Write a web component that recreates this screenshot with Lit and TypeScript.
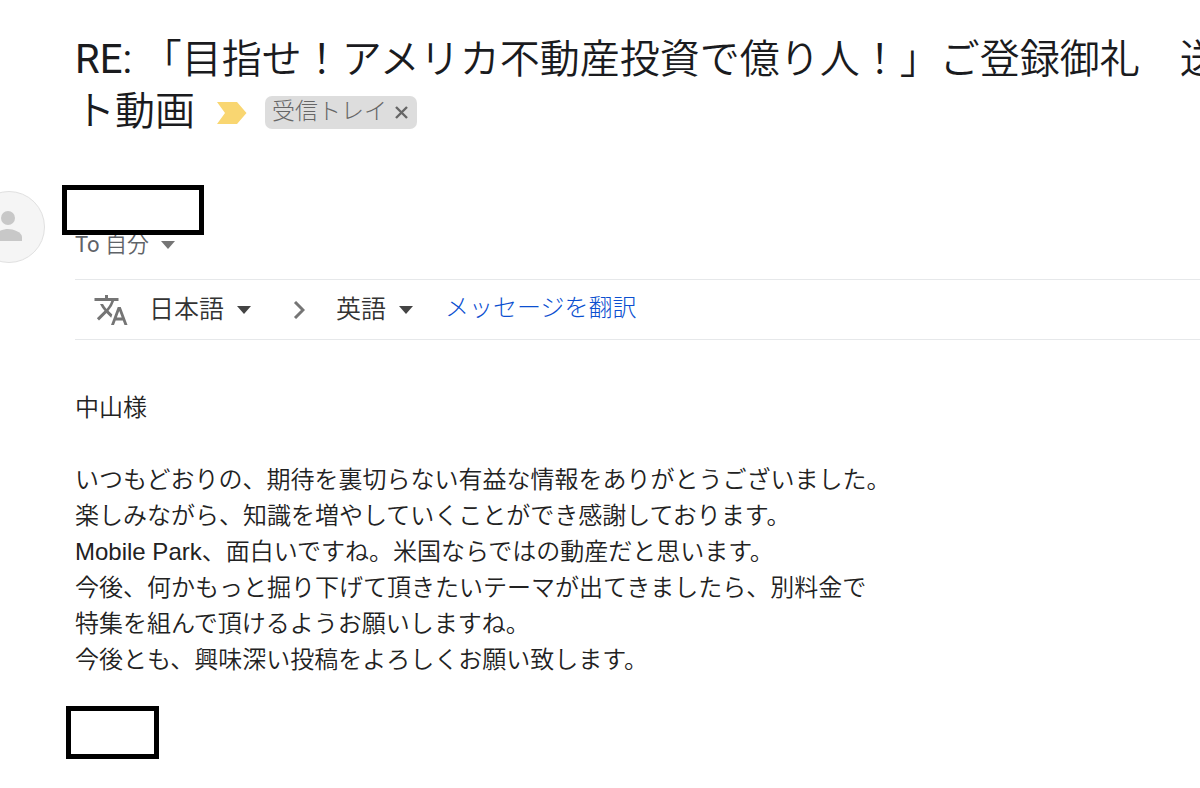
import { LitElement, html, css } from "lit";
import { customElement } from "lit/decorators.js";

const caret = html`<svg class="caret" viewBox="0 0 14 8" aria-hidden="true"><path d="M0 0h14L7 8z" /></svg>`;

@customElement("app-root")
export class AppRoot extends LitElement {
  static styles = css`
    :host {
      display: block;
      min-height: 100vh;
      overflow: hidden;
      background: #fff;
      color: #222;
      font-family: Roboto, "Noto Sans CJK JP", sans-serif;
      font-weight: 350;
    }
    .mail {
      padding: 34px 0 28px 75px;
    }
    button,
    select {
      font: inherit;
      color: inherit;
      background: none;
      border: 0;
      margin: 0;
      padding: 0;
      cursor: pointer;
    }
    .subject {
      margin: 0;
      font-size: 40px;
      line-height: 52px;
      font-weight: 350;
      color: #1a1b1e;
      white-space: nowrap;
    }
    .latin {
      font-weight: 400;
    }
    .tail {
      display: flex;
      align-items: center;
    }
    .marker {
      width: 30px;
      height: 22px;
      margin: 2px 18px 0 22px;
      fill: #f9d671;
    }
    .chip {
      display: flex;
      align-items: center;
      gap: 8px;
      height: 33px;
      padding: 0 9px 0 7px;
      border-radius: 7px;
      background: #ddd;
      color: #666;
      font-size: 23px;
      line-height: 32px;
      font-weight: 300;
    }
    .chip button {
      display: flex;
    }
    .chip svg {
      width: 13px;
      height: 13px;
      stroke: #666;
      stroke-width: 2.4;
    }
    .sender {
      position: relative;
      display: flex;
      align-items: flex-end;
      height: 72px;
      margin: 53px 0 16px;
    }
    .avatar {
      flex: none;
      width: 72px;
      height: 72px;
      margin: 0 30px 0 -102px;
    }
    .redacted {
      box-sizing: border-box;
      border: 5px solid #000;
      background: #fff;
    }
    .name {
      position: absolute;
      left: -13px;
      top: -6px;
      width: 142px;
      height: 50px;
    }
    .to {
      display: flex;
      align-items: center;
      gap: 12px;
      margin-bottom: 2px;
      font-size: 22px;
      line-height: 32px;
      color: #5f6368;
    }
    .caret {
      width: 14px;
      height: 8px;
      fill: #444;
      pointer-events: none;
    }
    .to .caret {
      fill: #757575;
    }
    .translate {
      display: flex;
      align-items: center;
      height: 59px;
      padding-left: 18px;
      border-top: 1px solid #e6e8ea;
      border-bottom: 1px solid #e6e8ea;
      color: #333;
      font-size: 25px;
    }
    .glyph {
      width: 36px;
      height: 36px;
      margin-right: 20px;
      fill: #757575;
    }
    .lang {
      display: flex;
      align-items: center;
      gap: 12px;
    }
    .lang select {
      appearance: none;
      height: 36px;
      line-height: 36px;
    }
    .arrow {
      width: 12px;
      height: 18px;
      margin: 0 31px 0 42px;
      fill: none;
      stroke: #757575;
      stroke-width: 3;
    }
    .link {
      margin-left: 32px;
      font-size: 24px;
      line-height: 32px;
      font-weight: 300;
      padding-bottom: 4px;
      color: #0b4fd0;
      text-decoration: none;
    }
    .body {
      margin-top: 50px;
      font-family: "Liberation Sans", "Noto Sans CJK JP", sans-serif;
      font-size: 24px;
      line-height: 36px;
    }
    .body p {
      margin: 0 0 36px;
    }
    .signature {
      width: 93px;
      height: 53px;
      margin: -8px 0 0 -9px;
    }
  `;

  render() {
    return html`
      <main class="mail">
        <h1 class="subject">
          <span class="latin">RE:</span> 「目指せ！アメリカ不動産投資で億り人！」ご登録御礼　送
          <span class="tail">
            ト動画
            <svg class="marker" viewBox="0 0 30 22" aria-hidden="true"><path d="M0 0h20l9.500 11L20 22H0l8-11z" /></svg>
            <span class="chip">
              受信トレイ
              <button aria-label="×">
                <svg viewBox="0 0 13 13"><path d="M1 1l11 11M12 1L1 12" /></svg>
              </button>
            </span>
          </span>
        </h1>

        <section class="sender">
          <svg class="avatar" viewBox="0 0 72 72" aria-hidden="true">
            <circle cx="36" cy="36" r="35.500" fill="#f5f5f5" stroke="#e0e0e0" />
            <circle cx="35" cy="27" r="7" fill="#c8c8c8" />
            <path d="M21 50v-4c0-5 9-8 14-8s14 3 14 8v4z" fill="#c8c8c8" />
          </svg>
          <button class="to"><span><span class="latin">To</span> 自分</span> ${caret}</button>
          <div class="redacted name"></div>
        </section>

        <section class="translate">
          <svg class="glyph" viewBox="0 0 24 24" aria-hidden="true">
            <path
              d="M12.870 15.070l-2.540-2.510.030-.030A17.520 17.520 0 0 0 14.070 6H17V4h-7V2H8v2H1v1.990h11.170C11.500 7.920 10.440 9.750 9 11.350 8.070 10.320 7.300 9.190 6.690 8h-2c.730 1.630 1.730 3.170 2.980 4.560l-5.090 5.020L4 19l5-5 3.110 3.110.760-2.040zM18.500 10h-2L12 22h2l1.120-3h4.750L21 22h2l-4.500-12zm-2.620 7l1.620-4.330L19.120 17h-3.240z"
            />
          </svg>
          <label class="lang">
            <select aria-label="日本語"><option>日本語</option></select>
            ${caret}
          </label>
          <svg class="arrow" viewBox="0 0 12 18" aria-hidden="true"><path d="M2 1l8 8-8 8" /></svg>
          <label class="lang">
            <select aria-label="英語"><option>英語</option></select>
            ${caret}
          </label>
          <a class="link" href="#">メッセージを翻訳</a>
        </section>

        <article class="body">
          <p>中山様</p>
          <p>
            いつもどおりの、期待を裏切らない有益な情報をありがとうございました。<br />
            楽しみながら、知識を増やしていくことができ感謝しております。<br />
            Mobile Park、面白いですね。米国ならではの動産だと思います。<br />
            今後、何かもっと掘り下げて頂きたいテーマが出てきましたら、別料金で<br />
            特集を組んで頂けるようお願いしますね。<br />
            今後とも、興味深い投稿をよろしくお願い致します。
          </p>
          <div class="redacted signature"></div>
        </article>
      </main>
    `;
  }
}
